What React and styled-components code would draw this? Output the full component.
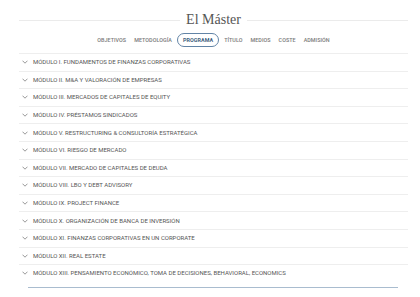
import React from "react";
import styled, { createGlobalStyle } from "styled-components";

const GlobalStyle = createGlobalStyle`
	html, body {
		margin: 0;
		padding: 0;
		background: #ffffff;
	}
	body {
		font-family: Roboto, "Liberation Sans", sans-serif;
	}
`;

const modules = [
	"MÓDULO I. FUNDAMENTOS DE FINANZAS CORPORATIVAS",
	"MÓDULO II. M&A Y VALORACIÓN DE EMPRESAS",
	"MÓDULO III. MERCADOS DE CAPITALES DE EQUITY",
	"MÓDULO IV. PRÉSTAMOS SINDICADOS",
	"MÓDULO V. RESTRUCTURING & CONSULTORÍA ESTRATÉGICA",
	"MÓDULO VI. RIESGO DE MERCADO",
	"MÓDULO VII. MERCADO DE CAPITALES DE DEUDA",
	"MÓDULO VIII. LBO Y DEBT ADVISORY",
	"MÓDULO IX. PROJECT FINANCE",
	"MÓDULO X. ORGANIZACIÓN DE BANCA DE INVERSIÓN",
	"MÓDULO XI. FINANZAS CORPORATIVAS EN UN CORPORATE",
	"MÓDULO XII. REAL ESTATE",
	"MÓDULO XIII. PENSAMIENTO ECONÓMICO, TOMA DE DECISIONES, BEHAVIORAL, ECONOMICS",
];

const tabs = ["OBJETIVOS", "METODOLOGÍA", "PROGRAMA", "TÍTULO", "MEDIOS", "COSTE", "ADMISIÓN"];

const Page = styled.div`
	width: 389px;
	margin: 0 0 0 19px;
	padding-top: 10px;
`;

const TitleRow = styled.div`
	display: flex;
	align-items: center;
	gap: 6px;
	height: 20px;
`;

const Rule = styled.div`
	flex: 1;
	height: 1px;
	background: #ebebeb;
`;

const Title = styled.h1`
	margin: 0;
	font-family: "Liberation Serif", "DejaVu Serif", serif;
	font-weight: 400;
	font-size: 14px;
	line-height: 20px;
	color: #555555;
`;

const Tabs = styled.nav`
	display: flex;
	justify-content: center;
	align-items: center;
	gap: 8px;
	height: 16px;
	margin: 2px 0 5px 0;
`;

const Tab = styled.span`
	font-size: 5.4px;
	font-weight: ${({ active }) => (active ? 700 : 500)};
	color: ${({ active }) => (active ? "#3f5f80" : "#7a7a7a")};
	letter-spacing: 0.05px;
	line-height: 12px;
	padding: ${({ active }) => (active ? "0 5px" : "0")};
	border: ${({ active }) => (active ? "1px solid #6284a6" : "none")};
	border-radius: 8px;
	margin: ${({ active }) => (active ? "0 -3px" : "0")};
`;

const List = styled.div`
	display: flex;
	flex-direction: column;
`;

const Row = styled.div`
	display: flex;
	align-items: center;
	gap: 5px;
	height: 16.6px;
	padding-left: 3px;
	border-top: 1px solid #eeeeee;
`;

const Label = styled.span`
	font-size: 6px;
	color: #555555;
	line-height: 8px;
	white-space: nowrap;
`;

const Scrollbar = styled.div`
	height: 1.5px;
	margin: 5px 10px 0 9px;
	background: #a9bccf;
`;

function Chevron() {
	return (
		<svg width="6" height="4" viewBox="0 0 6 4">
			<polyline points="0.5,0.7 3,3.2 5.5,0.7" fill="none" stroke="#7d7d7d" strokeWidth="0.8" />
		</svg>
	);
}

export default function App() {
	return (
		<>
			<GlobalStyle />
			<Page>
				<TitleRow>
					<Rule />
					<Title>El Máster</Title>
					<Rule />
				</TitleRow>
				<Tabs>
					{tabs.map(t => (
						<Tab key={t} active={t === "PROGRAMA"}>
							{t}
						</Tab>
					))}
				</Tabs>
				<List>
					{modules.map(m => (
						<Row key={m}>
							<Chevron />
							<Label>{m}</Label>
						</Row>
					))}
				</List>
				<Scrollbar />
			</Page>
		</>
	);
}
